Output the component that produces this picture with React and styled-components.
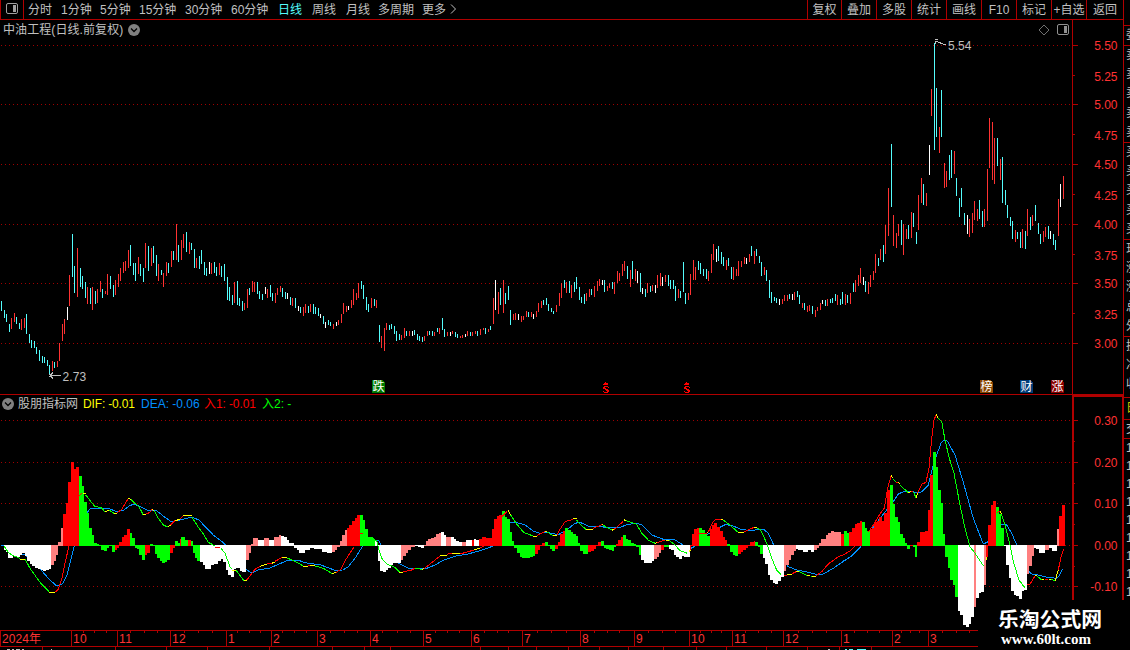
import React from "react";
import styled, { createGlobalStyle } from "styled-components";

const LINE = "#b00000";
const GREY = "#c0c0c0";
const RED = "#ff3232";

const GlobalStyle = createGlobalStyle`
  html, body { margin: 0; padding: 0; background: #000; }
  body { width: 1130px; height: 650px; overflow: hidden; }
  * { box-sizing: border-box; }
`;

const FONT = `"Liberation Sans", "Noto Sans CJK SC", sans-serif`;

/* Series are stored in thirds of a pixel, relative to the origin of each block. */
const CANDLES = [
  { x: 0, y: 200, d: `4 303 333 c,13 330 354 c,19 342 366 c,28 372 396 c,34 354 387 r,43 339 366 r,49 351 372 c,58 369 387 c,64 357 390 r,73 354 384 r,79 342 402 c,88 402 430 c,94 420 444 c,103 423 444 c,109 441 462 c,118 450 483 c,127 468 489 c,133 471 489 c,142 480 498 c,148 495 525 c,157 483 513 r,163 486 504 c,172 483 501 r,178 430 483 r,187 372 423 r,193 357 402 r,202 321 360 w,208 225 318 r,217 102 231 c,223 198 279 c,232 144 291 r,241 204 261 c,247 228 267 c,256 246 294 c,262 261 312 r,271 264 312 c,277 261 330 r,286 273 312 c,292 267 309 r,301 243 276 r,307 267 294 c,316 273 282 r,322 222 285 r,331 228 267 c,340 255 291 c,346 240 285 r,355 222 261 r,361 204 243 r,370 186 219 r,376 183 213 r,385 150 204 r,391 135 198 c,400 189 225 c,406 189 243 c,415 171 222 r,421 192 228 c,430 204 246 c,436 129 204 r,445 138 213 c,454 144 198 r,460 138 189 c,469 165 228 c,475 192 243 r,484 210 225 c,490 219 261 r,499 186 228 r,505 189 219 c,514 153 201 r,520 153 180 c,529 72 180 r,535 135 186 c,544 120 180 r,550 102 144 r,559 96 156 c,568 126 162 r,574 129 150 c,583 147 204 c,589 174 204 r,598 168 207 c,604 150 192 c,613 186 225 c,619 204 228 c,628 186 222 w,634 189 222 r,643 186 219 c,649 201 228 c,658 189 225 r,664 198 231 c,673 192 243 c,682 231 300 c,688 261 303 c,697 285 315 c,703 246 309 r,712 243 315 c,718 294 318 c,727 303 333 c,733 309 330 r,742 267 324 r,748 264 285 c,757 243 276 r,763 246 276 r,772 246 282 c,778 273 297 c,787 282 300 c,796 261 282 w,802 267 294 r,811 255 291 c,817 279 303 c,826 279 309 r,832 264 285 r` },
  { x: 270, y: 240, d: `31 138 156 r,37 144 171 c,46 156 177 c,52 159 177 w,61 171 195 c,67 174 198 r,76 174 204 c,85 198 213 w,91 201 219 c,100 201 228 r,106 192 219 r,115 198 219 c,121 192 216 r,130 192 222 c,136 201 222 c,145 204 228 c,151 222 234 w,160 228 252 c,166 246 264 w,175 240 255 c,181 246 258 c,190 252 267 r,199 246 258 w,205 240 255 r,214 222 249 r,220 189 222 r,229 198 216 r,235 198 210 w,244 180 204 r,250 147 195 r,259 159 180 r,265 129 174 r,274 123 147 c,280 135 177 c,289 171 210 c,295 192 216 c,304 174 204 r,313 177 198 c,319 180 204 r,328 255 306 c,334 288 324 r,343 264 333 r,349 249 270 r,358 255 270 c,364 252 267 c,373 258 282 c,379 273 303 c,388 282 300 c,394 285 300 r,403 264 294 r,409 273 288 c,418 273 288 r,427 273 288 w,433 270 285 c,442 282 300 c,448 288 303 c,457 291 306 c,463 288 303 r,472 273 288 r,478 273 285 c,487 273 288 c,493 276 288 r,502 264 276 c,508 264 282 r,517 234 270 c,523 267 291 c,532 276 288 r,541 276 288 w,547 273 282 r,556 276 291 c,562 282 294 c,571 288 294 r,577 285 294 r,586 282 291 w,592 273 288 r,601 276 288 c,607 276 288 r,616 273 282 r,622 273 288 c,631 267 285 r,640 264 270 r,646 264 282 c,655 267 276 r,661 258 270 c,670 174 252 r,676 120 210 w,685 156 222 r,691 144 195 c,700 120 219 r,706 159 192 c,715 138 180 c,721 210 255 c,730 222 240 r,736 219 240 r,745 222 240 w,754 228 246 r,760 228 240 r,769 213 231 r,775 216 231 c,784 216 231 r,790 222 237 w,799 213 231 r,805 189 216 r,814 183 204 r,820 180 195 c,829 174 195 c,835 192 213 c` },
  { x: 540, y: 230, d: `34 234 246 c,40 243 252 c,49 225 246 r,58 189 228 r,64 159 204 r,73 150 174 c,79 156 189 r,88 153 189 c,94 165 204 r,103 156 186 c,109 141 177 c,118 171 210 c,124 201 219 c,133 192 222 c,139 189 213 r,148 177 201 r,154 177 195 c,163 168 201 r,172 153 183 r,178 147 168 r,187 150 165 w,193 150 186 c,202 168 183 r,208 159 174 r,217 156 177 c,223 156 192 r,232 123 159 r,238 129 153 r,247 102 138 r,253 93 123 r,262 108 147 c,271 120 171 r,277 93 147 c,286 117 153 r,292 123 159 w,301 129 186 c,307 174 192 w,316 177 201 c,322 159 189 r,331 168 186 c,337 165 183 r,346 165 189 w,352 135 174 r,361 129 168 r,367 141 168 w,376 135 156 r,385 135 168 c,391 150 177 c,400 150 177 c,406 168 213 c,415 177 204 r,421 183 204 c,430 96 186 c,436 189 222 c,445 189 210 r,451 132 195 r,460 90 150 r,466 111 150 r,475 93 120 c,481 99 132 c,490 117 138 c,499 117 147 c,505 123 153 r,514 72 129 r,520 42 90 r,529 57 96 w,535 48 93 c,544 66 102 c,550 81 108 c,559 90 120 r,565 84 108 c,574 111 147 c,580 111 150 r,589 117 138 r,595 93 138 r,604 93 111 r,613 81 102 r,619 84 102 w,628 72 96 r,634 48 78 c,643 63 102 r,649 57 78 c,658 78 99 c,664 96 138 c,673 111 135 r,679 120 153 c,688 150 204 c,694 186 219 c,703 201 213 c,709 204 219 c,718 207 225 w,727 207 222 r,733 195 213 r,742 195 213 r,748 192 207 c,757 192 210 w,763 186 210 r,772 183 201 c,778 195 222 c,787 219 234 r,793 219 240 c,802 228 246 r,808 225 243 r,817 228 252 c,826 240 261 r,832 231 243 r,841 219 240 r,847 210 222 w,856 210 228 c,862 207 228 r` },
  { x: 820, y: 30, d: `31 807 819 c,37 804 819 c,46 792 813 c,52 795 825 r,61 807 825 c,67 786 822 c,76 792 825 r,82 795 819 c,91 789 822 r,100 759 786 c,106 750 786 r,115 735 768 r,121 714 759 r,130 741 765 w,136 753 786 c,145 756 792 r,151 735 771 r,160 723 750 r,166 672 729 r,175 684 708 c,181 657 690 r,190 645 696 c,196 585 672 r,205 474 618 r,214 342 531 c,220 555 648 r,229 609 654 r,235 582 618 r,244 570 645 c,250 582 675 r,259 597 627 r,265 585 627 c,274 546 624 r,280 549 591 c,289 606 642 c,295 495 600 r,304 444 519 r,310 462 525 c,319 489 528 r,328 345 435 w,334 177 258 r,343 39 360 c,349 174 321 c,358 291 369 r,364 180 321 c,373 399 474 r,379 423 471 r,388 375 450 c,394 360 444 c,403 363 432 r,409 444 498 c,418 504 561 c,424 474 531 c,433 549 585 c,442 555 612 w,448 567 621 r,457 549 609 r,463 513 570 r,472 537 573 r,478 510 567 c,487 543 591 c,493 537 591 r,502 417 573 r,508 264 414 r,517 276 450 r,523 324 462 r,532 324 408 c,541 387 450 r,547 381 519 c,556 480 525 c,562 525 564 c,571 561 588 c,577 573 627 c,586 600 636 r,592 606 627 c,601 606 654 c,607 597 654 r,616 603 657 c,622 537 618 r,631 561 600 c,637 555 588 r,646 525 573 c,655 579 612 c,661 612 642 c,670 603 636 r,676 591 621 r,685 588 627 c,691 603 627 w,700 612 645 c,706 630 660 c,715 507 618 r,721 462 531 w,730 438 507 r` },
];

const BARS = [
  { x: 0, y: 390, d: `w 12 480 18 487 24 504 39 498 48 501 60 496 66 489 75 498 82 512 90 522 96 528 105 534 115 537 123 540 130 543 138 540 148 537 p 153 524 162 514 168 495 175 456 183 414 r 189 372 198 339 204 276 213 216 222 237 228 231 g 237 258 246 288 252 336 261 369 267 414 276 435 282 459 291 462 298 466 303 480 312 483 321 474 327 468 336 486 r 345 480 351 474 358 456 366 441 372 435 381 417 g 390 429 396 444 405 474 411 477 418 495 426 510 r 435 495 441 489 g 450 462 459 468 465 492 471 504 480 513 486 519 495 516 501 510 r 510 489 519 474 g 525 453 534 459 r 540 447 g 543 441 555 450 r 564 450 g 573 453 579 489 585 504 591 512 w 600 516 609 525 615 537 633 525 642 522 654 512 663 507 669 516 678 540 684 555 693 561 702 537 708 534 720 543 726 546 p 738 510 747 489 753 462 759 444 w 774 450 p 792 444 w 807 450 p 822 441 837 435 w 843 438 852 441 861 450 867 459 882 474 890 480 897 489 900` },
  { x: 300, y: 490, d: `w 0 189 15 180 30 174 42 178 66 186 81 189 p 96 186 105 180 111 171 120 153 126 135 135 120 r 141 114 147 105 156 94 165 84 171 75 g 180 75 189 90 195 117 204 141 219 147 w 225 153 231 156 234 213 240 243 249 246 258 240 264 234 272 225 280 219 p 303 210 309 198 318 189 324 180 333 171 w 345 168 354 171 363 174 p 372 164 378 153 384 147 393 144 402 141 408 132 417 129 w 423 126 432 135 p 438 141 w 453 141 462 147 468 153 478 157 p 486 155 w 498 150 r 516 150 w 522 147 528 150 r 537 147 546 141 558 144 576 117 582 87 591 78 597 75 g 606 63 615 81 621 87 630 126 636 153 642 174 651 189 660 201 666 204 690 201 699 198 r 705 192 714 180 720 168 726 159 g 735 156 744 168 750 177 756 183 r 765 177 774 156 780 132 789 123 g 795 114 804 120 813 126 819 132 828 138 834 159 840` },
  { x: 560, y: 490, d: `g 60 183 69 192 r 84 186 93 183 102 177 108 168 114 156 g 123 153 132 174 138 177 147 180 156 183 162 171 r 168 162 174 150 183 141 g 189 135 198 147 204 150 213 160 222 163 228 171 237 195 w 243 210 252 219 276 213 p 282 207 291 200 297 189 r 303 180 g 312 171 w 327 177 333 180 342 195 348 201 357 207 366 198 372 201 r 390 180 393 165 396 132 402 117 411 114 g 417 114 426 120 435 132 441 138 r 450 117 456 105 463 99 472 111 480 123 489 141 495 150 g 501 162 510 186 519 195 525 198 r 534 192 543 186 549 180 558 174 564 168 570 156 582 153 g 585 156 594 171 600 192 w 609 204 615 222 624 255 630 270 639 279 645 282 654 273 663 261 p 672 243 678 225 687 210 693 195 702 183 w 708 177 714 180 729 186 744 180 753 186 p 762 180 771 174 777 159 783 147 798 135 804 129 813 123 822 126 r 843 132` },
  { x: 830, y: 395, d: `r 33 417 g 42 408 51 414 r 57 411 66 399 75 387 81 384 90 378 g 96 381 105 399 111 408 r 120 402 126 399 132 381 141 378 148 366 156 378 162 354 171 285 g 180 270 189 327 195 366 204 381 210 417 219 429 225 444 231 462 r 240 454 g 249 457 255 486 r 261 441 270 411 285 408 294 345 300 240 g 309 171 318 216 324 285 333 324 339 417 345 486 354 519 360 555 369 570 375 606 w 384 648 390 660 399 690 408 696 417 687 423 666 p 432 636 w 438 609 447 594 453 591 p 462 570 r 468 486 474 390 483 330 489 318 g 498 336 507 357 513 399 w 522 453 528 510 537 549 543 588 552 600 558 603 567 612 576 588 582 585 p 591 537 597 513 606 483 w 612 459 618 462 627 474 p 645 465 w 657 460 666 468 p 681 402 r 687 363 696 330 705` },
];

const DEA = [
  { x: 0, y: 390, d: `3,466 12,467 25,487 75,495 90,510 120,537 150,570 170,588 187,582 200,558 210,520 222,470 235,420 261,369 270,357 300,354 330,357 350,365 372,360 390,346 405,343 430,354 445,362 470,362 490,378 513,395 540,390 575,381 597,390 620,415 640,435 660,450 675,463 700,495 740,540 755,549 775,540 810,534 860,512 900,512` },
  { x: 300, y: 490, d: `0,214 25,220 60,224 105,241 128,240 145,230 165,205 187,170 200,155 215,147 237,153 242,165 260,195 300,222 325,235 375,237 405,225 430,211 470,197 500,193 540,182 580,168 600,140 620,105 633,96 645,96 675,105 700,123 720,130 740,127 775,134 800,120 825,100 840,97` },
  { x: 560, y: 490, d: `60,97 85,108 110,110 150,112 180,112 205,103 230,100 245,105 275,135 310,148 345,150 370,165 385,178 400,172 430,140 480,112 495,104 515,106 540,117 570,122 610,117 625,130 640,162 660,200 685,230 710,240 740,246 770,253 790,252 820,235 855,210 870,202` },
  { x: 830, y: 395, d: `20,512 65,483 92,455 120,410 150,370 190,320 205,297 220,290 245,289 262,294 275,290 295,270 310,210 322,175 333,145 342,135 352,138 375,180 400,262 430,370 460,447 475,440 500,400 515,388 530,390 545,415 560,450 575,490 597,530 607,538 630,541 650,547 680,550 688,542 697,522` },
];

const DIF = [
  { x: 0, y: 390, d: `g 12,468 25,487 35,495 60,505|y 60,507 75,507|g 75,507 90,535 120,577 148,605|y 148,607 165,607|r 165,607 175,598 187,560 195,520 207,468|r 237,318 247,309|y 250,309 257,312|g 257,315 285,350 303,352 315,366|y 315,366 327,360|g 327,360 342,370|y 342,370 350,370|r 350,370 365,358 385,325|y 385,324 393,328|g 393,328 405,340 418,352 430,375|y 430,375 437,372|r 437,372 448,368 457,358|y 457,358 463,362|g 463,362 475,385 490,405 503,411|y 503,411 512,405|r 512,405 525,392|y 525,392 540,388|r 540,388 550,378|y 550,376 575,376|g 575,380 595,412 610,432 625,457 645,468|r 645,472 660,472|g 663,475 675,490 690,530 695,537|y 695,540 708,540|g 708,540 732,573|y 732,573 740,570|r 740,570 750,558 765,538 780,529|y 780,529 800,522|r 800,520 815,520|y 815,520 825,516|r 825,514 845,503|y 845,502 860,503|g 860,503 880,512 900,522 909,528` },
  { x: 300, y: 490, d: `y 8,229 25,228|r 25,226 30,228|y 30,226 45,228|g 45,228 70,235 95,250|y 95,250 108,248|r 108,248 122,238 135,212 163,170|r 177,133 188,129|g 205,143 219,145 230,153 237,180 245,205 260,222 285,232 298,246|y 298,246 310,246|r 310,244 330,242 345,235|g 345,235 365,238|y 365,238 372,236|r 372,236 390,222 420,198|y 420,197 440,195|r 440,193 455,190|y 455,190 480,192|r 480,192 522,180|y 522,178 540,176|r 540,174 552,168|r 600,85 622,64|y 624,61 632,75|g 632,75 650,102 672,128 700,138|y 700,139 710,139|r 710,137 735,124|y 735,124 742,126|g 742,126 760,138|y 760,138 770,136|r 770,136 780,118 795,95 820,88` },
  { x: 560, y: 490, d: `y 40,86 50,87|g 50,90 60,103 78,118|y 78,118 100,118|r 100,115 125,104|y 125,103 130,106|g 130,106 155,120|y 155,121 163,118|r 163,118 190,94|y 192,89 198,92|g 198,92 230,103 245,130 265,150 285,160|y 285,160 290,158|r 290,158 315,150|y 318,150 327,151|g 327,151 345,165 360,182 382,190|y 388,184 393,180|r 417,130 440,130|y 440,130 445,126|r 445,126 460,95 468,88 483,88|y 483,88 490,89|g 490,90 510,105 533,126|y 533,127 553,127|r 553,125 582,112|y 582,112 590,113|g 590,113 602,120 620,160 635,205 650,240 663,254|r 672,256 680,255|y 680,253 695,253|r 695,252 708,245|y 708,244 717,245|g 717,245 740,256|y 740,256 750,258|g 752,258 757,259|y 757,260 768,260|r 768,258 785,245 805,222 835,200 850,195 870,183` },
  { x: 830, y: 395, d: `r 60,468 75,452|r 115,412 130,390 150,356 163,340 173,280 183,243|y 183,241 188,250|g 190,252 198,262|r 198,262 205,262|y 205,262 210,268|g 210,270 235,293|y 235,294 243,290|r 243,290 250,290|g 250,290 258,308|y 258,310 263,293|r 263,293 275,268 288,262 297,220 305,130 312,75 318,60|y 318,58 325,70|g 325,70 335,80 345,135 358,190 372,235 390,330 405,400 420,455 435,475 460,512|y 468,495 470,486|r 500,352 510,350|y 510,349 514,356|g 514,356 525,390 540,450 550,500 567,555 585,579|r 592,570 600,567 615,543|y 615,541 622,544|g 622,544 635,555|y 635,555 643,553|r 645,553 655,553|y 656,553 663,553|g 663,553 675,558|y 675,559 685,525|r 685,525 692,490 701,461` },
];

const CANDLE_COLOURS = { c: "#54fcfc", r: "#ff3232", w: "#ffffff" };
const BAR_COLOURS = { r: "#ff0000", g: "#00ff00", w: "#ffffff", p: "#ff8080" };
const LINE_COLOURS = { r: "#ff0000", g: "#00ff00", y: "#ffff00" };

const candles = CANDLES.flatMap((block) =>
  block.d.split(",").map((item) => {
    const [x, top, bottom, kind] = item.split(" ");
    const y = block.y + Math.round(top / 3);
    return { x: block.x + Math.floor(x / 3), y, h: block.y + Math.round(bottom / 3) - y, fill: CANDLE_COLOURS[kind] };
  })
);

const ZERO = 545;
const bars = BARS.flatMap((block) => {
  const tokens = block.d.split(" ");
  const steps = [];
  let kind = "w";
  for (let i = 0; i < tokens.length; ) {
    if (/[a-z]/.test(tokens[i])) {
      kind = tokens[i++];
    } else {
      steps.push({ x: block.x + Math.round(tokens[i] / 3), y: block.y + Math.round((tokens[i + 1] ?? 0) / 3), kind, last: tokens[i + 1] === undefined });
      i += 2;
    }
  }
  return steps.filter((s) => !s.last).map((s, i) => {
    const next = steps[i + 1] ? steps[i + 1].x : s.x + 3;
    const top = Math.min(s.y, ZERO);
    const bottom = Math.max(s.y, ZERO + 1);
    return { x: s.x, w: next - s.x, y: top, h: bottom - top, fill: BAR_COLOURS[s.kind] };
  });
});

const place = (points, block) =>
  points.map((p) => {
    const [x, y] = p.split(",");
    return `${(block.x + x / 3).toFixed(1)},${(block.y + y / 3).toFixed(1)}`;
  }).join(" ");

const deaPoints = DEA.map((block) => place(block.d.split(" "), block)).join(" ");
const difLines = DIF.flatMap((block) =>
  block.d.split("|").map((part) => {
    const [kind, ...points] = part.split(" ");
    return { stroke: LINE_COLOURS[kind], points: place(points, block) };
  })
);

const Screen = styled.div`
  position: relative;
  display: flex;
  width: 1130px;
  height: 650px;
  overflow: hidden;
  background: #000;
  color: ${GREY};
  font: 12px/18px ${FONT};
  white-space: nowrap;
`;

const Main = styled.div`
  display: flex;
  flex-direction: column;
  width: 1123px;
`;

const TopBar = styled.div`
  display: flex;
  height: 20px;
  border-bottom: 1px solid ${LINE};
  line-height: 20px;
`;

const LayoutToggle = styled.div`
  width: 24px;
  padding: 3px 0 0 4px;
  border: solid ${LINE};
  border-width: 0 1px;
  line-height: 0;
`;

const Periods = styled.div`
  display: flex;
  flex: 1;
  padding-left: 4px;
`;

const Period = styled.span`
  width: ${(p) => p.$w}px;
  color: ${(p) => (p.$active ? "#54fcfc" : GREY)};
`;

const Action = styled.span`
  width: ${(p) => p.$w}px;
  border-left: 1px solid ${LINE};
  text-align: center;
`;

const Panel = styled.div`
  display: flex;
  height: ${(p) => p.$h}px;
  border-bottom: ${(p) => (p.$ruled ? `1px solid ${LINE}` : "0")};
`;

const Plot = styled.div`
  width: 1072px;
`;

const PanelHeader = styled.div`
  display: flex;
  align-items: center;
  height: 18px;
  padding: ${(p) => p.$top || 0}px 3px 0 ${(p) => p.$pad}px;
`;

const StockName = styled.span`
  width: 125px;
  letter-spacing: 0.08px;
`;

const HeaderTools = styled.div`
  display: flex;
  align-items: center;
  gap: 6px;
  margin-left: auto;
`;

const Reading = styled.span`
  width: ${(p) => p.$w}px;
  margin-left: ${(p) => p.$ml || 0}px;
  color: ${(p) => p.$c};
  letter-spacing: ${(p) => p.$ls || 0}px;
`;

const Graph = styled.svg`
  display: block;
  shape-rendering: crispEdges;
  font-family: ${FONT};
  font-size: 12px;
`;

const Smooth = styled.svg`
  display: block;
  flex: none;
`;

const DateAxis = styled.div`
  display: flex;
  flex-direction: column;
  width: 978px;
  height: 20px;
  border-top: 1px solid ${LINE};
  color: ${RED};
`;

const Months = styled.div`
  display: flex;
  height: 16px;
  border-bottom: 1px solid ${LINE};
`;

const Month = styled.span`
  flex: none;
  width: ${(p) => p.$w}px;
  padding-left: 1px;
  border-left: 1px solid ${LINE};
  background-image: ${(p) => p.$ticks.map(() => `linear-gradient(${LINE}, ${LINE})`).join(", ") || "none"};
  background-position: ${(p) => p.$ticks.map((t) => `${t - 1}px 0`).join(", ") || "0 0"};
  background-size: 1px 2px;
  background-repeat: no-repeat;
  line-height: 17px;
  letter-spacing: ${(p) => (p.$year ? 0.1 : 0.4)}px;
`;

const SideStrip = styled.div`
  display: flex;
  flex-direction: column;
  width: 7px;
  height: 600px;
  padding-top: 25px;
  border-left: 1px solid ${LINE};
  overflow: hidden;
`;

const SideGroup = styled.div`
  height: ${(p) => p.$h}px;
  padding-left: 2px;
  border-top: 1px solid ${LINE};
  color: ${(p) => p.$c || GREY};
  line-height: ${(p) => p.$row}px;
  overflow: hidden;
`;

const SideRow = styled.div`
  height: ${(p) => p.$row}px;
`;

const Watermark = styled.div`
  position: absolute;
  left: 978px;
  top: 600px;
  width: 152px;
  height: 50px;
  padding: 6px 0 0 20px;
  background: #000;
  color: #fff;
`;

const SiteName = styled.div`
  font: 700 20.8px/25px "Noto Sans CJK SC", sans-serif;
`;

const SiteUrl = styled.div`
  padding-left: 3px;
  font: 700 15px/16px "Liberation Serif", serif;
`;

function PanelIcon({ color = "#a0a0a0" }) {
  return (
    <Smooth width="13" height="12" viewBox="0 0 13 12">
      <rect x="1.5" y="0.5" width="11" height="10" rx="1.5" fill="none" stroke={color} />
      <rect x="8" y="2" width="3" height="7" fill={color} />
    </Smooth>
  );
}

function Chevron() {
  return (
    <Smooth width="12" height="12" viewBox="0 0 12 12">
      <circle cx="6" cy="6" r="6" fill="#808080" />
      <path d="M3 4.5 L6 7.5 L9 4.5" fill="none" stroke="#000" strokeWidth="1.3" />
    </Smooth>
  );
}

const Grid = ({ rows }) =>
  rows.map((y) => <path key={y} d={`M1 ${y + 0.5}H1072`} stroke="#a00000" strokeDasharray="1 3" />);

function Badge({ x, fill, children }) {
  return (
    <g>
      <path d={`M${x} 380h10l3 3v10h-13z`} fill={fill} />
      <text x={x + 6.5} y="391" fill="#fff" textAnchor="middle" fontSize="12">{children}</text>
    </g>
  );
}

/* Up arrow over an S, drawn as pixel rows: [x, y, width]. */
const DIVIDEND = [[2, 382, 1], [1, 383, 4], [0, 384, 5], [1, 386, 4], [0, 387, 2], [5, 387, 1], [0, 388, 3], [2, 389, 3], [3, 390, 3], [0, 391, 1], [4, 391, 2], [1, 392, 4]];

function Dividend({ x }) {
  return DIVIDEND.map(([dx, y, w]) => <rect key={y + "-" + dx} x={x + dx} y={y} width={w} height="1" fill="#ff0000" />);
}

function Axis({ top, height, heavy, labels, minor }) {
  return (
    <Graph width="51" height={height} viewBox={`1072 ${top} 51 ${height}`}>
      <rect x="1072" y={top} width={heavy ? 2 : 1} height={height} fill={LINE} />
      {heavy && <path d="M1072 396H1123M1122.5 395V630" stroke={LINE} strokeWidth="2" />}
      {labels.map(([label, tick, y]) => (
        <g key={label}>
          {tick && <rect x="1072" y={tick} width="6" height="1" fill={LINE} />}
          <text x="1117.5" y={y + 4.5} textAnchor="end" fill={RED}>{label}</text>
        </g>
      ))}
      {minor.map((y) => <rect key={y} x="1072" y={y} width="3" height="1" fill={LINE} />)}
    </Graph>
  );
}

const PERIODS = [["分时", 33], ["1分钟", 39], ["5分钟", 39], ["15分钟", 46], ["30分钟", 46], ["60分钟", 47], ["日线", 34], ["周线", 34], ["月线", 32], ["多周期", 44], ["更多", 28]];
const ACTIONS = [["复权", 34], ["叠加", 35], ["多股", 35], ["统计", 35], ["画线", 35], ["F10", 35], ["标记", 35], ["+自选", 35], ["返回", 37]];
const MONTHS = [["2024年", 0], ["10", 71], ["11", 117], ["12", 170], ["1", 226], ["2", 271], ["3", 317], ["4", 370], ["5", 423], ["6", 471], ["7", 522], ["8", 580], ["9", 634], ["10", 689], ["11", 732], ["12", 783], ["1", 841], ["2", 892], ["3", 928]];
const WEEKS = [83, 94, 106, 130, 144, 157, 184, 198, 212, 237, 249, 260, 282, 294, 306, 330, 344, 357, 382, 397, 410, 435, 447, 459, 484, 497, 508, 537, 551, 566, 594, 607, 619, 648, 662, 675, 700, 711, 721, 745, 758, 771, 798, 812, 826, 854, 867, 879, 901, 910, 919, 942, 956, 969];
const AXIS_END = 978;

export default function App() {
  return (
    <Screen>
      <GlobalStyle />
      <Main>
        <TopBar>
          <LayoutToggle><PanelIcon /></LayoutToggle>
          <Periods>
            {PERIODS.map(([label, w]) => (
              <Period key={label} $w={w} $active={label === "日线"}>{label}</Period>
            ))}
            <Smooth width="7" height="18" viewBox="0 0 7 18">
              <path d="M1 4.5 L5.5 9 L1 13.5" fill="none" stroke={GREY} />
            </Smooth>
          </Periods>
          {ACTIONS.map(([label, w]) => <Action key={label} $w={w}>{label}</Action>)}
        </TopBar>

        <Panel $h={375} $ruled>
          <Plot>
            <PanelHeader $pad={3} $top={1}>
              <StockName>中油工程(日线.前复权)</StockName>
              <Chevron />
              <HeaderTools>
                <Smooth width="12" height="12" viewBox="0 0 12 12">
                  <path d="M6 1 L11 6 L6 11 L1 6 Z" fill="none" stroke="#707070" />
                </Smooth>
                <PanelIcon color="#909090" />
              </HeaderTools>
            </PanelHeader>
            <Graph width="1072" height="356" viewBox="0 38 1072 356">
              <Grid rows={[45, 104, 164, 224, 283, 343]} />
              {candles.map((c, i) => <rect key={i} x={c.x} y={c.y} width="1" height={c.h} fill={c.fill} />)}
              <path d="M50 375.5H61M50 375.5L53 372.5M50 375.5L53 378.5M49 374.5h2M49 376.5h2" fill="none" stroke={GREY} />
              <text x="62.5" y="381" fill={GREY} letterSpacing="0.1">2.73</text>
              <path d="M935 41L946 45M935 41.5h3M935 39.5h3M935 42v2" fill="none" stroke={GREY} />
              <text x="948" y="50" fill={GREY}>5.54</text>
              <Badge x={372} fill="#007800">跌</Badge>
              <Dividend x={603} />
              <Dividend x={684} />
              <Badge x={980} fill="#884400">榜</Badge>
              <Badge x={1020} fill="#003c78">财</Badge>
              <Badge x={1051} fill="#880000">涨</Badge>
            </Graph>
          </Plot>
          <Axis
            top={20} height={374}
            labels={[["5.50", 45, 45.5], ["5.25", 0, 76.5], ["5.00", 104, 104.5], ["4.75", 0, 135.5], ["4.50", 164, 164.5], ["4.25", 0, 195.5], ["4.00", 224, 224.5], ["3.75", 0, 255.5], ["3.50", 283, 283.5], ["3.25", 0, 314.5], ["3.00", 343, 343.5]].map(([t, tick, y]) => [t, tick || null, y])}
            minor={[75, 134, 194, 254, 313]}
          />
        </Panel>

        <Panel $h={235}>
          <Plot>
            <PanelHeader $pad={2}>
              <Chevron />
              <Reading $w={65} $c={GREY} $ml={4}>股朋指标网</Reading>
              <Reading $w={58} $c="#ffff00" $ls={-0.15}>DIF: -0.01</Reading>
              <Reading $w={63} $c="#0090ff">DEA: -0.06</Reading>
              <Reading $w={58} $c="#ff0000" $ls={-0.1}>入1: -0.01</Reading>
              <Reading $w={40} $c="#00ff00">入2: -</Reading>
            </PanelHeader>
            <Graph width="1072" height="217" viewBox="0 413 1072 217">
              <Grid rows={[420, 462, 503, 545, 586]} />
              <polyline points={deaPoints} fill="none" stroke="#0090ff" />
              {bars.map((b, i) => <rect key={i} x={b.x} y={b.y} width={b.w} height={b.h} fill={b.fill} />)}
              {difLines.map((l, i) => <polyline key={i} points={l.points} fill="none" stroke={l.stroke} />)}
            </Graph>
          </Plot>
          <Axis
            top={395} height={235} heavy
            labels={[["0.30", 420, 420.5], ["0.20", 462, 462.5], ["0.10", 503, 503.5], ["0.00", 545, 545.5], ["-0.10", 586, 586.5]]}
            minor={[441, 483, 524, 566]}
          />
        </Panel>

        <DateAxis>
          <Months>
            {MONTHS.map(([label, x], i) => {
              const end = MONTHS[i + 1] ? MONTHS[i + 1][1] : AXIS_END;
              const ticks = WEEKS.filter((w) => w > x && w < end).map((w) => w - x);
              return <Month key={x} $w={end - x} $year={i === 0} $ticks={ticks}>{label}</Month>;
            })}
          </Months>
          <Graph width="978" height="3" viewBox="0 647 978 3">
            {[42, 115, 166, 207, 269, 332, 364, 390, 480, 508, 536, 568, 599, 628, 663, 696, 726, 766, 807, 839, 871].map((x) => (
              <rect key={x} x={x} y="647" width="1" height="3" fill={LINE} />
            ))}
            <path d="M7 649.5h3M12 649.5h2M16 649.5h4M22 649.5h2M51 649.5h1M828 649.5h2" stroke={GREY} />
            <path d="M845 649.5h2M849 649.5h4M857 649.5h9" stroke="#54fcfc" />
          </Graph>
        </DateAxis>
      </Main>

      <SideStrip>
        <SideGroup $h={20} $row={19}><SideRow $row={19}>委</SideRow></SideGroup>
        <SideGroup $h={97} $row={19.2}>{[5, 4, 3, 2, 1].map((n) => <SideRow key={n} $row={19.2}>卖</SideRow>)}</SideGroup>
        <SideGroup $h={97} $row={19.2}>{[1, 2, 3, 4, 5].map((n) => <SideRow key={n} $row={19.2}>买</SideRow>)}</SideGroup>
        <SideGroup $h={97} $row={19.2}>{"现涨涨总外".split("").map((t, i) => <SideRow key={i} $row={19.2}>{t}</SideRow>)}</SideGroup>
        <SideGroup $h={61} $row={19.2}>{"换净收".split("").map((t, i) => <SideRow key={i} $row={19.2}>{t}</SideRow>)}</SideGroup>
        <SideGroup $h={22} $row={21} $c="#c8c800"><SideRow $row={21}>日</SideRow></SideGroup>
        <SideGroup $h={19} $row={18}><SideRow $row={18}>交</SideRow></SideGroup>
        <SideGroup $h={162} $row={18}>{[0, 1, 2, 3, 4, 5, 6, 7, 8].map((n) => <SideRow key={n} $row={18}>1</SideRow>)}</SideGroup>
      </SideStrip>

      <Watermark>
        <SiteName>乐淘公式网</SiteName>
        <SiteUrl>www.60lt.com</SiteUrl>
      </Watermark>
    </Screen>
  );
}
